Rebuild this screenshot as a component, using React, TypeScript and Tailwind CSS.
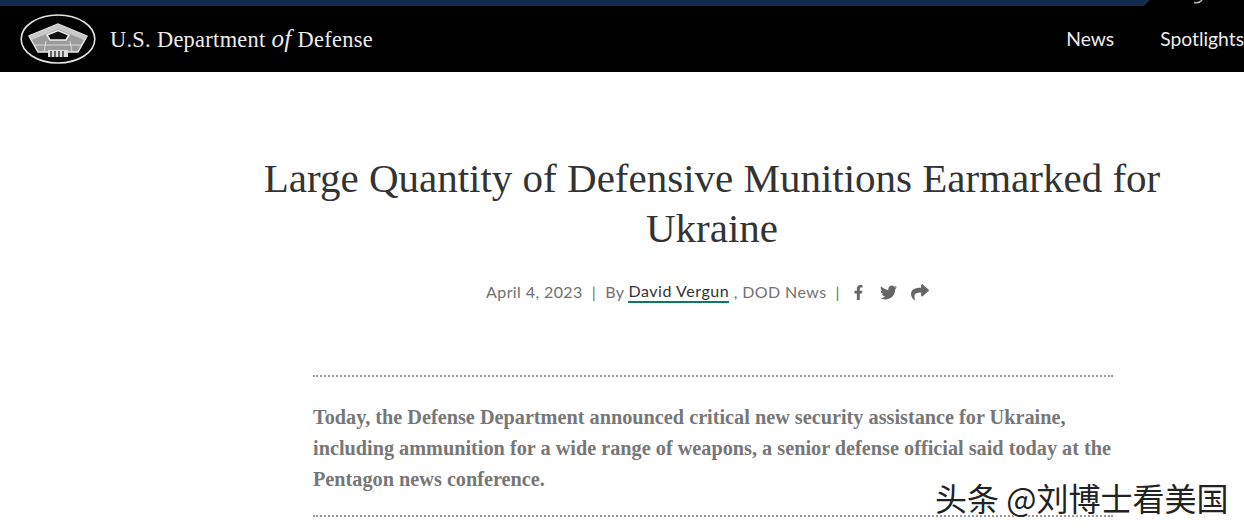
import React from 'react';
import { FaFacebookF, FaTwitter, FaShare } from 'react-icons/fa';

const Seal = () => (
  <svg width="76" height="50" viewBox="0 0 76 50" className="shrink-0">
    <ellipse cx="38" cy="25" rx="36.8" ry="24" fill="#000" stroke="#e4e4e4" strokeWidth="1.6" />
    <path d="M9 22 L38 10 L67 22 L58 38 L18 38 Z" fill="#9b9b9b" stroke="#e8e8e8" strokeWidth="1.4" />
    <path d="M9 22 L38 10 L67 22 L64 26 L38 15 L12 26 Z" fill="#c9c9c9" />
    <path d="M27 21 L38 16.5 L49 21 L46 26 L30 26 Z" fill="#111" stroke="#eee" strokeWidth="1.5" />
    <path d="M14 31 H62 M26 27 L24 38 M50 27 L52 38" stroke="#e8e8e8" strokeWidth="0.8" fill="none" />
    <rect x="28" y="36" width="20" height="7" fill="#ddd" />
    <path d="M31 37 V43 M35 37 V43 M39 37 V43 M43 37 V43" stroke="#111" strokeWidth="1.2" />
  </svg>
);

const App: React.FC = () => {
  return (
    <div className="relative h-[530px] w-[1244px] overflow-hidden bg-white font-['Lato',sans-serif]">
      <header className="relative h-[72px] bg-black">
        <div className="h-[6px] bg-[#122b4e] [clip-path:polygon(0_0,1150px_0,1144px_100%,0_100%)]" />
        {/* bottom of a clipped search icon at the top edge */}
        <svg width="12" height="4" viewBox="0 0 12 4" className="absolute top-0 left-[1193px]">
          <path d="M1 2.5 C4 3.2 7 2.5 9 0" stroke="#bbb" strokeWidth="1.5" fill="none" />
        </svg>
        <div className="flex h-[66px] items-center pl-5">
          <Seal />
          <div className="ml-[14px] whitespace-nowrap font-['Liberation_Serif',serif] text-[22.4px] tracking-[0.3px] text-[#ececec]">
            U.S. Department <i className="text-[25px]">of</i> Defense
          </div>
          <nav className="ml-auto flex gap-[46px] whitespace-nowrap text-[19.3px] text-[#ececec]">
            <span>News</span>
            <span>Spotlights</span>
          </nav>
        </div>
      </header>

      <main className="pl-[180px]">
        <h1 className="mx-auto mt-[81px] w-[960px] text-center font-['Liberation_Serif',serif] text-[41px] leading-[50px] text-[#333]">
          Large Quantity of Defensive Munitions Earmarked for Ukraine
        </h1>

        <div className="mt-[23px] flex h-[32px] items-center justify-center pr-[9px] text-[16px] tracking-[0.4px] text-[#717171]">
          <span>April 4, 2023</span>
          <span className="mx-[9px]">|</span>
          <span>By&nbsp;</span>
          <span className="border-b-2 border-[#0c7a5f] leading-[20px] tracking-[0.55px] text-[#333]">David Vergun</span>
          <span>&nbsp;, DOD News</span>
          <span className="mx-[9px]">|</span>
          <span className="flex items-center text-[#666]">
            <FaFacebookF size={15} className="ml-[2px]" />
            <FaTwitter size={17} className="ml-[14px]" />
            <FaShare size={18} className="ml-[14px]" />
          </span>
        </div>

        <section className="mt-[67px] ml-[133px] w-[800px] border-y-2 border-dotted border-[#999] pt-[25px] pb-[20px] font-['Liberation_Serif',serif] text-[20.25px] leading-[31px] font-bold text-[#777]">
          Today, the Defense Department announced critical new security assistance for Ukraine, including ammunition for a wide range of weapons, a senior defense official said today at the Pentagon news conference.
        </section>
      </main>

      <div className="absolute top-[477px] left-[935px] font-['Noto_Sans_CJK_SC',sans-serif] text-[32px] leading-[40px] whitespace-nowrap text-[#222] [text-shadow:1px_1px_0_#fff,-1px_0_0_#fff]">
        头条 @刘博士看美国
      </div>
    </div>
  );
};

export default App;
